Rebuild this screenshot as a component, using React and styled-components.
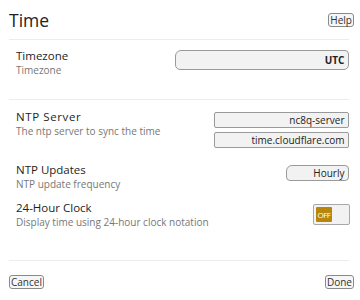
import styled, { createGlobalStyle } from 'styled-components';

const GlobalStyle = createGlobalStyle`
  body {
    margin: 0;
    background: #fff;
    font-family: "Open Sans", "Noto Sans", "DejaVu Sans", sans-serif;
    color: #222;
  }
`

const Page = styled.div`
  width: 360px;
  height: 300px;
  padding: 0 11px 0 9px;
  box-sizing: border-box;
  display: flex;
  flex-direction: column;
`

const Header = styled.div`
  height: 39px;
  display: flex;
  align-items: center;
  justify-content: space-between;
  border-bottom: 1px solid #ececec;
`

const Title = styled.h1`
  margin: 0;
  font-size: 17.5px;
  font-weight: normal;
  color: #222;
`

const SmallButton = styled.button`
  font-family: "Open Sans", sans-serif;
  font-size: 10px;
  color: #333;
  background: #f6f6f6;
  border: 1px solid #8a8a8a;
  border-radius: 3px;
  padding: 0 1px;
  height: 14px;
  line-height: 12px;
  margin-right: ${p => (p.$edge ? '-5px' : '0')};
`

const Section = styled.div`
  border-bottom: 1px solid #ececec;
  padding: ${p => p.$pad};
  display: flex;
  flex-direction: column;
`

const Row = styled.div`
  display: flex;
  justify-content: space-between;
  align-items: flex-start;
  padding-left: 7px;
  margin-top: ${p => p.$mt || 0}px;
`

const Text = styled.div`
  display: flex;
  flex-direction: column;
  gap: 1px;
`

const Label = styled.div`
  font-size: 11.5px;
  letter-spacing: ${p => p.$spread || 0}px;
  color: #1e1e1e;
  line-height: 15px;
`

const Hint = styled.div`
  font-size: 10px;
  color: #777;
  line-height: 13px;
`

const Controls = styled.div`
  display: flex;
  flex-direction: column;
  gap: 4px;
  align-items: flex-end;
  margin-top: 3px;
`

const Field = styled.div`
  width: ${p => p.$w}px;
  height: ${p => p.$h || 16}px;
  margin-top: ${p => p.$mt || 0}px;
  box-sizing: border-box;
  background: #f2f2f2;
  border: 1px solid #9a9a9a;
  border-radius: ${p => p.$radius || '2px'};
  font-size: 10px;
  line-height: ${p => (p.$h || 16) - 2}px;
  text-align: right;
  padding-right: 3.5px;
  color: #222;
  font-weight: ${p => (p.$bold ? 'bold' : 'normal')};
`

const Toggle = styled.div`
  width: 37px;
  height: 21px;
  box-sizing: border-box;
  background: #f2f2f2;
  border: 1px solid #a8a8a8;
  border-radius: 2px;
  padding: 2px;
  display: flex;
  margin: 4px -1px 0 0;
`

const Knob = styled.div`
  width: 16px;
  height: 15px;
  background: #b8860b;
  border-radius: 1px;
  color: #fff;
  font-size: 8px;
  line-height: 15px;
  text-align: center;
  letter-spacing: -0.5px;
`

const Footer = styled.div`
  display: flex;
  justify-content: space-between;
  align-items: center;
  padding-top: 14px;
`

export default function App() {
  return (
    <>
      <GlobalStyle />
      <Page>
        <Header>
          <Title>Time</Title>
          <SmallButton $edge>Help</SmallButton>
        </Header>

        <Section $pad="8px 0 22px 0">
          <Row>
            <Text>
              <Label>Timezone</Label>
              <Hint>Timezone</Hint>
            </Text>
            <Field $w={174} $h={20} $mt={2} $radius="6px 4px 5px 5px" $bold>UTC</Field>
          </Row>
        </Section>

        <Section $pad="9px 0 31px 0">
          <Row>
            <Text>
              <Label $spread={0.6}>NTP Server</Label>
              <Hint>The ntp server to sync the time</Hint>
            </Text>
            <Controls>
              <Field $w={135}>nc8q-server</Field>
              <Field $w={135}>time.cloudflare.com</Field>
            </Controls>
          </Row>
          <Row $mt={14}>
            <Text>
              <Label>NTP Updates</Label>
              <Hint>NTP update frequency</Hint>
            </Text>
            <Field $w={63} $mt={3} $radius="6px 4px 4px 4px">Hourly</Field>
          </Row>
          <Row $mt={9}>
            <Text>
              <Label>24-Hour Clock</Label>
              <Hint>Display time using 24-hour clock notation</Hint>
            </Text>
            <Toggle>
              <Knob>OFF</Knob>
            </Toggle>
          </Row>
        </Section>

        <Footer>
          <SmallButton>Cancel</SmallButton>
          <SmallButton $edge>Done</SmallButton>
        </Footer>
      </Page>
    </>
  );
}
